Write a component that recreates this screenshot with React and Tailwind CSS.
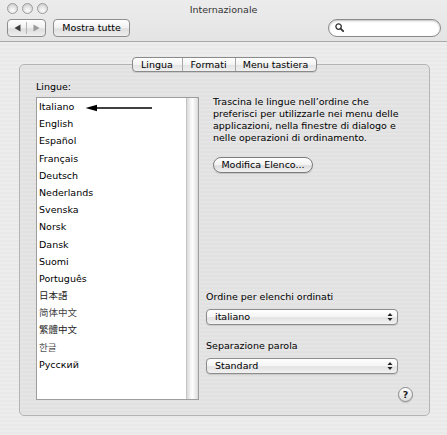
import React from "react";

const languages = [
  { label: "Italiano" },
  { label: "English" },
  { label: "Español" },
  { label: "Français" },
  { label: "Deutsch" },
  { label: "Nederlands" },
  { label: "Svenska" },
  { label: "Norsk" },
  { label: "Dansk" },
  { label: "Suomi" },
  { label: "Português" },
  { label: "日本語", cls: "[font-family:'DejaVu_Sans','Noto_Sans_CJK_JP',sans-serif] text-[#222]" },
  { label: "简体中文", cls: "[font-family:'DejaVu_Sans','Noto_Sans_CJK_SC',sans-serif] text-[#444]" },
  { label: "繁體中文", cls: "[font-family:'DejaVu_Sans','Noto_Sans_CJK_TC',sans-serif] text-[#222]" },
  { label: "한글", cls: "[font-family:'DejaVu_Sans','Noto_Sans_CJK_KR',sans-serif] text-[#555]" },
  { label: "Русский" },
];

function Light() {
  return (
    <div className="w-[11px] h-[11px] rounded-full border border-[#9c9c9c] bg-[radial-gradient(circle_at_50%_70%,#ffffff,#dcdcdc_60%,#c4c4c4)]" />
  );
}

function PopupArrows() {
  return (
    <svg width="6" height="10" viewBox="0 0 6 10" className="shrink-0">
      <path d="M3 1 L5.5 4 L0.5 4 Z" fill="#222" />
      <path d="M3 9 L5.5 6 L0.5 6 Z" fill="#222" />
    </svg>
  );
}

function Popup({ value }) {
  return (
    <div className="w-[192px] h-[16px] rounded-[4px] border border-[#8c8c8c] bg-[linear-gradient(to_bottom,#ffffff,#f4f4f4_50%,#e2e2e2_55%,#f2f2f2)] flex items-center pl-[8px] pr-[4px] shadow-[0_1px_1px_rgba(0,0,0,0.12)]">
      <span className="flex-1 leading-none">{value}</span>
      <PopupArrows />
    </div>
  );
}

export default function App() {
  return (
    <div className="w-[447px] h-[435px] overflow-hidden bg-[#ececec] text-[9px] text-black [font-family:'DejaVu_Sans',sans-serif]">
      {/* title bar + toolbar */}
      <div className="h-[42px] border-b border-[#a9a9a9] bg-[linear-gradient(to_bottom,#ececec,#e4e4e4)] flex flex-col">
        <div className="h-[17px] grid grid-cols-[1fr_auto_1fr] items-center">
          <div className="flex items-center gap-[4px] pl-[7px]">
            <Light />
            <Light />
            <Light />
          </div>
          <div className="text-[9.5px] text-[#333] leading-none pt-[2px]">Internazionale</div>
          <div />
        </div>
        <div className="h-[19px] mt-[1px] flex items-center pl-[7px] pr-[6px]">
          <div className="w-[39px] h-[18px] rounded-[4px] border border-[#8e8e8e] bg-[linear-gradient(to_bottom,#ffffff,#f0f0f0_50%,#dedede_55%,#eeeeee)] flex items-center">
            <div className="flex-1 flex justify-center">
              <svg width="7" height="8" viewBox="0 0 7 8">
                <path d="M0.5 4 L6.5 0.5 L6.5 7.5 Z" fill="#3c3c3c" />
              </svg>
            </div>
            <div className="w-px h-[12px] bg-[#b4b4b4]" />
            <div className="flex-1 flex justify-center">
              <svg width="7" height="8" viewBox="0 0 7 8">
                <path d="M6.5 4 L0.5 0.5 L0.5 7.5 Z" fill="#9a9a9a" />
              </svg>
            </div>
          </div>
          <div className="ml-[7px] w-[77px] h-[18px] rounded-[4px] border border-[#8e8e8e] bg-[linear-gradient(to_bottom,#ffffff,#f0f0f0_50%,#dedede_55%,#eeeeee)] flex items-center justify-center text-[9.5px] leading-none">
            Mostra tutte
          </div>
          <div className="flex-1" />
          <div className="w-[113px] h-[18px] rounded-full border border-[#8a8a8a] bg-white shadow-[inset_0_1px_2px_rgba(0,0,0,0.25)] flex items-center pl-[6px]">
            <svg width="9" height="9" viewBox="0 0 9 9">
              <circle cx="3.6" cy="3.6" r="2.7" fill="none" stroke="#333" strokeWidth="1.3" />
              <path d="M5.6 5.6 L8.2 8.2" stroke="#333" strokeWidth="1.8" strokeLinecap="round" />
            </svg>
          </div>
        </div>
      </div>

      {/* body */}
      <div className="h-[393px] bg-[repeating-linear-gradient(to_bottom,#ededed_0px,#ededed_2px,#e9e9e9_2px,#e9e9e9_4px)] pt-[15px]">
        {/* tabs */}
        <div className="relative z-10 flex justify-center pl-[1px]">
          <div className="h-[15px] flex rounded-[4px] border border-[#8a8a8a] bg-[linear-gradient(to_bottom,#ffffff,#f3f3f3_50%,#e3e3e3_55%,#f0f0f0)] overflow-hidden shadow-[0_1px_1px_rgba(0,0,0,0.1)] text-[9.5px] leading-none">
            <div className="w-[50px] flex items-center justify-center border-r border-[#a8a8a8]">Lingua</div>
            <div className="w-[53px] flex items-center justify-center border-r border-[#a8a8a8]">Formati</div>
            <div className="w-[80px] flex items-center justify-center">Menu tastiera</div>
          </div>
        </div>

        {/* group box */}
        <div className="-mt-[8px] ml-[19px] w-[411px] h-[352px] rounded-[5px] border border-[#b4b4b4] bg-[repeating-linear-gradient(to_bottom,#e5e5e5_0px,#e5e5e5_2px,#e1e1e1_2px,#e1e1e1_4px)] pt-[16px] pl-[16px] pr-[16px] flex">
          {/* language list */}
          <div className="w-[163px] shrink-0">
            <div className="leading-[12px] text-[9.5px] pl-[0px]">Lingue:</div>
            <div className="mt-[4px] h-[303px] border border-[#9d9d9d] bg-white flex relative">
              <div className="flex-1 pl-[2px] text-[9.5px]">
                {languages.map((l) => (
                  <div key={l.label} className={"h-[17.2px] leading-[17.2px] whitespace-nowrap " + (l.cls || "")}>
                    {l.label}
                  </div>
                ))}
              </div>
              <div className="w-[12px] border-l border-[#c4c4c4] bg-[linear-gradient(to_right,#d9d9d9,#f7f7f7_35%,#fdfdfd_50%,#e6e6e6_85%,#d6d6d6)]" />
              <svg className="absolute left-[48px] top-[6px]" width="70" height="8" viewBox="0 0 70 8">
                <path d="M0.5 4 L12 0.8 L12 7.2 Z" fill="#000" />
                <path d="M11 4 L67 4" stroke="#000" strokeWidth="1.7" />
              </svg>
            </div>
          </div>

          {/* right column */}
          <div className="ml-[7px] flex-1 flex flex-col">
            <div className="mt-[15px] pl-[7px] leading-[12px] whitespace-nowrap text-[9.5px]">
              <div>Trascina le lingue nell’ordine che</div>
              <div>preferisci per utilizzarle nei menu delle</div>
              <div>applicazioni, nella finestre di dialogo e</div>
              <div>nelle operazioni di ordinamento.</div>
            </div>
            <div className="mt-[13px] ml-[7px] w-[100px] h-[16px] rounded-full border border-[#7c7c7c] bg-[linear-gradient(to_bottom,#ffffff,#f2f2f2_50%,#dcdcdc_55%,#f2f2f2)] shadow-[0_1px_1px_rgba(0,0,0,0.15)] flex items-center justify-center text-[9.5px] leading-none">
              Modifica Elenco...
            </div>
            <div className="mt-[118px] leading-[12px] text-[9.5px]">Ordine per elenchi ordinati</div>
            <div className="mt-[6px] text-[9.5px]">
              <Popup value="italiano" />
            </div>
            <div className="mt-[15px] leading-[12px] text-[9.5px]">Separazione parola</div>
            <div className="mt-[6px] text-[9.5px]">
              <Popup value="Standard" />
            </div>
            <div className="mt-[13px] self-end w-[15px] h-[15px] rounded-full border border-[#8a8a8a] bg-[linear-gradient(to_bottom,#ffffff,#ececec_50%,#dcdcdc)] shadow-[0_1px_1px_rgba(0,0,0,0.15)] flex items-center justify-center text-[9.5px] font-bold leading-none text-[#222]">
              ?
            </div>
          </div>
        </div>
      </div>
    </div>
  );
}
